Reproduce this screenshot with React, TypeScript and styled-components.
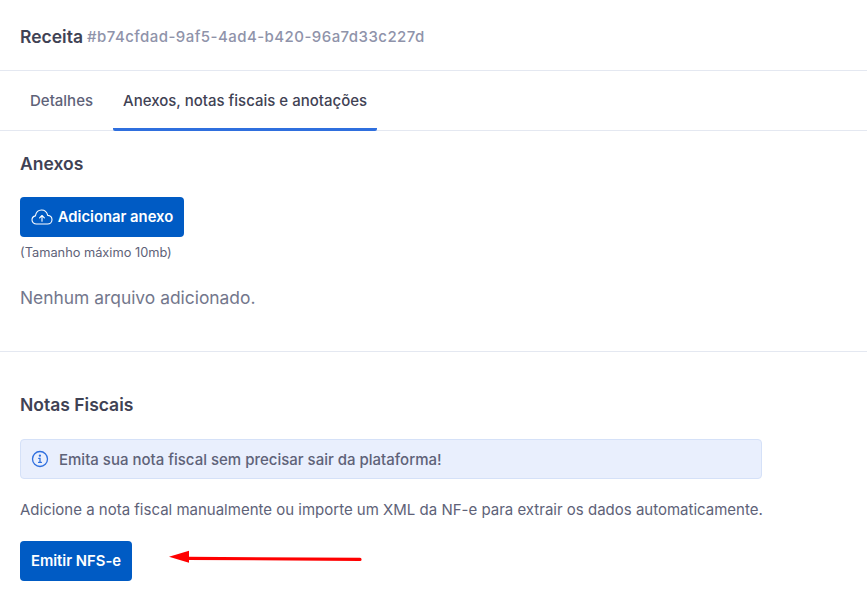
import React from "react";
import styled, { createGlobalStyle } from "styled-components";

const Global = createGlobalStyle`
  html, body { margin: 0; padding: 0; background: #fff; }
  body { font-family: Inter, "Noto Sans", sans-serif; overflow: hidden; }
  * { box-sizing: border-box; }
`;

const Page = styled.div`
  position: relative;
  width: 867px;
  height: 596px;
  overflow: hidden;
`;

const Header = styled.header`
  height: 71px;
  display: flex;
  align-items: center;
  gap: 4px;
  padding: 2px 20px 0;
  border-bottom: 1px solid #e4e8f1;
`;

const Title = styled.h1`
  margin: 0;
  font-size: 17.5px;
  font-weight: 600;
  color: #3f4254;
`;

const Hash = styled.span`
  font-size: 15px;
  font-weight: 500;
  letter-spacing: 0.45px;
  color: #8f93aa;
`;

const Tabs = styled.nav`
  height: 60px;
  display: flex;
  gap: 10px;
  padding-left: 20px;
  border-bottom: 1px solid #e4e8f1;
`;

const Tab = styled.div<{ $active?: boolean }>`
  height: 60px;
  padding: 1px 10px 0;
  display: flex;
  align-items: center;
  font-size: 15px;
  font-weight: 500;
  color: ${(p) => (p.$active ? "#3f4254" : "#5e6278")};
  border-bottom: 3px solid ${(p) => (p.$active ? "#2f6fde" : "transparent")};
  border-radius: 0 0 2px 2px;
`;

const Section = styled.section<{ $height: number; $top: number; $divider?: boolean }>`
  height: ${(p) => p.$height}px;
  padding: ${(p) => p.$top}px 20px 0;
  border-bottom: ${(p) => (p.$divider ? "1px solid #e4e8f1" : "none")};
`;

const Heading = styled.h2`
  margin: 0;
  font-size: 17.5px;
  line-height: 24px;
  font-weight: 600;
  color: #3f4254;
`;

const Button = styled.button<{ $top: number; $width: number }>`
  display: flex;
  align-items: center;
  justify-content: center;
  gap: 5px;
  width: ${(p) => p.$width}px;
  height: 40px;
  margin-top: ${(p) => p.$top}px;
  padding: 0 0 1px;
  border: 0;
  border-radius: 4px;
  background: #005bc4;
  color: #fff;
  font-family: inherit;
  font-size: 14.8px;
  font-weight: 600;
`;

const Hint = styled.div`
  margin-top: 8px;
  font-size: 12.8px;
  line-height: 16px;
  color: #5e6278;
`;

const Empty = styled.p`
  margin: 25px 0 0;
  font-size: 17.4px;
  line-height: 24px;
  color: #73778c;
`;

const Alert = styled.div`
  display: flex;
  align-items: center;
  gap: 10px;
  width: 742px;
  height: 40px;
  margin-top: 22px;
  padding: 0 10px;
  background: #e9effd;
  border: 1px solid #d5e1f8;
  border-radius: 4px;
  font-size: 15px;
  font-weight: 500;
  color: #5e6278;
`;

const Paragraph = styled.p`
  margin: 21px 0 0;
  font-size: 15px;
  line-height: 20px;
  color: #5e6278;
`;

const Arrow = styled.svg`
  position: absolute;
  left: 165px;
  top: 545px;
`;

const CloudIcon = () => (
  <svg width="22" height="18" viewBox="0 0 22 18" fill="none" stroke="#fff" strokeWidth="1.1" strokeLinecap="round" strokeLinejoin="round">
    <path d="M5.5 16C3 16 1 14.2 1 11.9c0-2 1.4-3.6 3.4-4C5 4.7 7.4 2 10.6 2c3 0 5.4 2.5 6.1 5.4 2.4.2 4.3 2 4.3 4.4 0 2.3-1.9 4.2-4.4 4.2H5.5z" />
    <path d="M11 13.2V7.7M8.6 9.9 11 7.5l2.4 2.4" />
  </svg>
);

const InfoIcon = () => (
  <svg width="18" height="18" viewBox="0 0 18 18" fill="none" stroke="#2f6fde" strokeWidth="1.3" strokeLinecap="round">
    <circle cx="9" cy="9" r="7.5" />
    <path d="M7.7 8.3H9v4M7.6 12.4h2.8" />
    <circle cx="8.9" cy="5.7" r="0.5" fill="#2f6fde" />
  </svg>
);

export default function App() {
  return (
    <Page>
      <Global />
      <Header>
        <Title>Receita</Title>
        <Hash>#b74cfdad-9af5-4ad4-b420-96a7d33c227d</Hash>
      </Header>
      <Tabs>
        <Tab>Detalhes</Tab>
        <Tab $active>Anexos, notas fiscais e anotações</Tab>
      </Tabs>
      <Section $height={221} $top={21} $divider>
        <Heading>Anexos</Heading>
        <Button $top={21} $width={164}>
          <CloudIcon />
          Adicionar anexo
        </Button>
        <Hint>(Tamanho máximo 10mb)</Hint>
        <Empty>Nenhum arquivo adicionado.</Empty>
      </Section>
      <Section $height={244} $top={41}>
        <Heading>Notas Fiscais</Heading>
        <Alert>
          <InfoIcon />
          Emita sua nota fiscal sem precisar sair da plataforma!
        </Alert>
        <Paragraph>Adicione a nota fiscal manualmente ou importe um XML da NF-e para extrair os dados automaticamente.</Paragraph>
        <Button $top={21} $width={112}>Emitir NFS-e</Button>
      </Section>
      <Arrow width="200" height="24" viewBox="0 0 200 24" aria-hidden="true">
        <path d="M22 13.3 195 14.4" stroke="#ff0000" strokeWidth="3.2" strokeLinecap="round" fill="none" />
        <path d="M4 11.7 24 5.7V17.7Z" fill="#ff0000" />
      </Arrow>
    </Page>
  );
}
